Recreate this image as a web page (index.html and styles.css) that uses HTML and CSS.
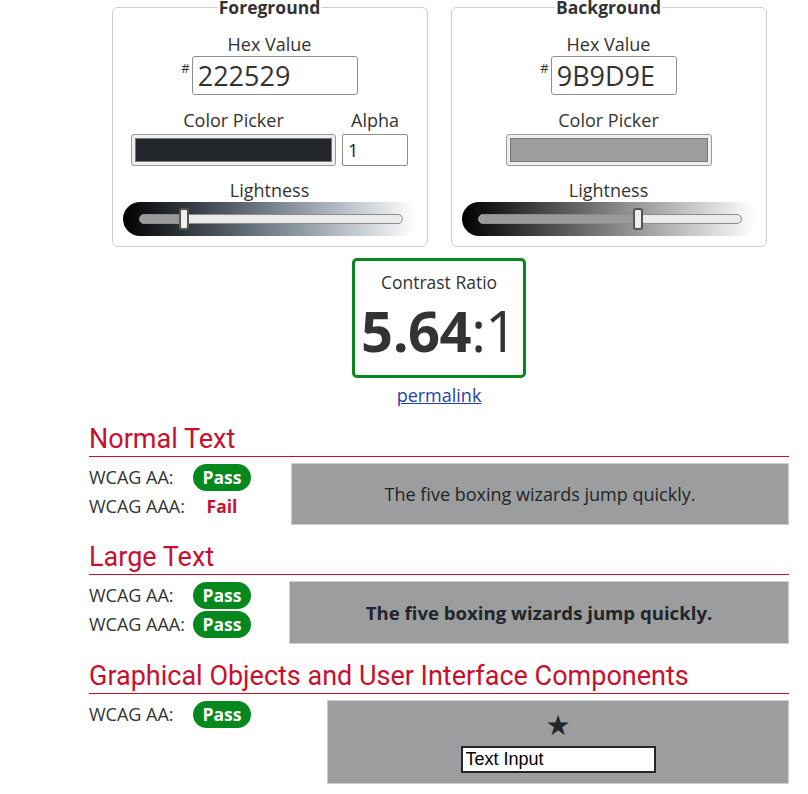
FILE: index.html
```html
<!DOCTYPE html>
<html lang="en">
<head>
<meta charset="utf-8">
<title>Contrast Checker</title>
<link rel="stylesheet" href="styles.css">
</head>
<body>
<main class="wrap">
  <div class="pickers">
    <fieldset class="picker">
      <legend>Foreground</legend>
      <div class="field">
        <label class="lbl">Hex Value</label>
        <div class="hexrow"><span class="hash">#</span><input class="hex hex-fg" type="text" value="222529"></div>
      </div>
      <div class="pickrow">
        <div class="col">
          <label class="lbl">Color Picker</label>
          <div class="swatch swatch-fg"><span class="swatch-fill fill-fg"></span></div>
        </div>
        <div class="col">
          <label class="lbl">Alpha</label>
          <input class="alpha" type="text" value="1">
        </div>
      </div>
      <div class="field field-light">
        <label class="lbl">Lightness</label>
        <div class="slider grad-fg">
          <div class="track">
            <div class="track-fill" style="width:17%"></div>
            <div class="thumb" style="left:15%"></div>
          </div>
        </div>
      </div>
    </fieldset>
    <fieldset class="picker">
      <legend>Background</legend>
      <div class="field">
        <label class="lbl">Hex Value</label>
        <div class="hexrow"><span class="hash">#</span><input class="hex hex-bg" type="text" value="9B9D9E"></div>
      </div>
      <div class="pickrow">
        <div class="col">
          <label class="lbl">Color Picker</label>
          <div class="swatch swatch-bg"><span class="swatch-fill fill-bg"></span></div>
        </div>
      </div>
      <div class="field field-light">
        <label class="lbl">Lightness</label>
        <div class="slider grad-bg">
          <div class="track">
            <div class="track-fill" style="width:61%"></div>
            <div class="thumb" style="left:59%"></div>
          </div>
        </div>
      </div>
    </fieldset>
  </div>

  <div class="ratio-wrap">
    <div class="ratio">
      <div class="ratio-label">Contrast Ratio</div>
      <div class="ratio-value"><b>5.64</b>:1</div>
    </div>
    <a class="permalink" href="#">permalink</a>
  </div>

  <section class="result">
    <h2>Normal Text</h2>
    <div class="result-body">
      <div class="checks">
        <div class="check"><span class="check-name">WCAG AA:</span><span class="badge pass">Pass</span></div>
        <div class="check"><span class="check-name">WCAG AAA:</span><span class="badge fail">Fail</span></div>
      </div>
      <div class="sample sample-normal">The five boxing wizards jump quickly.</div>
    </div>
  </section>

  <section class="result">
    <h2>Large Text</h2>
    <div class="result-body">
      <div class="checks">
        <div class="check"><span class="check-name">WCAG AA:</span><span class="badge pass">Pass</span></div>
        <div class="check"><span class="check-name">WCAG AAA:</span><span class="badge pass">Pass</span></div>
      </div>
      <div class="sample sample-large">The five boxing wizards jump quickly.</div>
    </div>
  </section>

  <section class="result">
    <h2>Graphical Objects and User Interface Components</h2>
    <div class="result-body">
      <div class="checks checks-gui">
        <div class="check"><span class="check-name">WCAG AA:</span><span class="badge pass">Pass</span></div>
      </div>
      <div class="sample sample-gui">
        <span class="star">&#9733;</span>
        <input class="demo-input" type="text" value="Text Input">
      </div>
    </div>
  </section>
</main>
</body>
</html>
```

FILE: styles.css
```css
* { box-sizing: border-box; }

html, body {
  margin: 0;
  padding: 0;
  background: #fff;
}

body {
  font-family: "Open Sans", "Liberation Sans", sans-serif;
  font-size: 18px;
  line-height: 23px;
  color: #333;
  overflow: hidden;
}

.wrap {
  width: 700px;
  margin: -4px 0 0 89px;
}

/* pickers */
.pickers {
  display: flex;
  justify-content: center;
  gap: 23px;
}

.picker {
  width: 316px;
  margin: 0;
  padding: 15px 10px 10px 10px;
  border: 1px solid #cfcfcf;
  border-radius: 6px;
  display: flex;
  flex-direction: column;
  align-items: center;
}

.picker legend {
  font-weight: 700;
  font-size: 17.5px;
  line-height: 22px;
  color: #333;
  padding: 0 1px;
  margin: 0 auto;
  text-align: center;
}

.field {
  display: flex;
  flex-direction: column;
  align-items: center;
}

.lbl {
  display: block;
  text-align: center;
  line-height: 23px;
  color: #333;
}

.hexrow {
  display: flex;
  align-items: flex-start;
}

.hash {
  font-size: 13px;
  line-height: 13px;
  margin: 6px 2px 0 0;
  color: #333;
}

.hex {
  height: 39px;
  border: 1px solid #8f8f8f;
  border-radius: 3px;
  padding: 0 5px;
  font-family: "Open Sans", sans-serif;
  font-size: 27px;
  color: #333;
  background: #fff;
}

.hex-fg { width: 166px; }
.hex-bg { width: 126px; }

.pickrow {
  display: flex;
  align-items: flex-end;
  gap: 6px;
  margin-top: 14px;
}

.col {
  display: flex;
  flex-direction: column;
  align-items: center;
}

.col .lbl { margin-bottom: 2px; }

.swatch {
  display: flex;
  height: 32px;
  padding: 3px;
  border: 1px solid #9a9a9a;
  border-radius: 3px;
  background: #efefef;
}

.swatch-fg { width: 205px; }
.swatch-bg { width: 206px; }

.swatch-fill {
  flex: 1;
  border: 1px solid #777;
}

.fill-fg { background: #222529; }
.fill-bg { background: #9b9d9e; }

.alpha {
  width: 66px;
  height: 32px;
  border: 1px solid #8f8f8f;
  border-radius: 2px;
  padding: 0 5px;
  font-family: "Open Sans", sans-serif;
  font-size: 18px;
  color: #222;
  background: #fff;
}

.field-light {
  margin-top: 13px;
  align-self: stretch;
  align-items: stretch;
}

.slider {
  height: 34px;
  border-radius: 17px;
  padding: 0 14px 0 16px;
  display: flex;
  align-items: center;
}

.grad-fg {
  background: linear-gradient(to right, #000 0%, #74808b 50%, #fff 100%);
}

.grad-bg {
  background: linear-gradient(to right, #000 0%, #808080 50%, #fff 100%);
}

.track {
  position: relative;
  flex: 1;
  height: 10px;
  border: 1px solid #8c8c8c;
  border-radius: 5px;
  background: #ebebeb;
}

.track-fill {
  height: 100%;
  background: #9a9a9a;
  border-radius: 5px 0 0 5px;
}

.thumb {
  position: absolute;
  top: -7px;
  width: 10px;
  height: 22px;
  background: #eee;
  border: 2px solid #555;
  border-radius: 3px;
}

/* ratio */
.ratio-wrap {
  display: flex;
  flex-direction: column;
  align-items: center;
  margin-top: 11px;
}

.ratio {
  width: 174px;
  height: 120px;
  border: 3px solid #05891f;
  border-radius: 5px;
  display: flex;
  flex-direction: column;
  align-items: center;
  padding-top: 10px;
}

.ratio-label {
  font-size: 17.5px;
  line-height: 23px;
  color: #333;
}

.ratio-value {
  font-size: 56px;
  line-height: 56px;
  color: #333;
  margin-top: 8px;
  letter-spacing: -0.5px;
}

.ratio-value b { font-weight: 700; }

.permalink {
  margin-top: 6px;
  color: #2641a8;
  font-size: 18px;
  line-height: 23px;
}

/* results */
.result h2 {
  margin: 16px 0 0 0;
  font-family: Roboto, "Liberation Sans", sans-serif;
  font-weight: 400;
  font-size: 27px;
  line-height: 32px;
  color: #c8102e;
  border-bottom: 1px solid #c8102e;
  padding-bottom: 1px;
}

.result-body {
  display: flex;
  align-items: flex-start;
  margin-top: 6px;
}

.checks {
  display: flex;
  flex-direction: column;
  gap: 1px;
  width: 200px;
  flex: none;
}

.checks-gui { width: 238px; }

.check {
  display: flex;
  align-items: center;
  height: 28px;
}

.check-name {
  width: 104px;
  color: #333;
}

.badge {
  width: 58px;
  height: 27px;
  border-radius: 14px;
  display: flex;
  align-items: center;
  justify-content: center;
  font-weight: 700;
  font-size: 17.5px;
}

.pass {
  background: #05891f;
  color: #fff;
}

.fail {
  color: #c8102e;
}

.sample {
  flex: 1;
  background: #9b9d9e;
  border: 1px solid #cfcfcf;
  color: #222529;
  display: flex;
  align-items: center;
  justify-content: center;
}

.sample-normal {
  height: 62px;
  margin-left: 2px;
  font-size: 18px;
}

.sample-large {
  height: 63px;
  font-size: 18.6px;
  font-weight: 700;
}

.sample-gui {
  height: 84px;
  flex-direction: column;
  justify-content: flex-start;
  padding-top: 9px;
}

.star {
  font-family: "DejaVu Sans", sans-serif;
  font-size: 28px;
  line-height: 32px;
  color: #222529;
}

.demo-input {
  width: 195px;
  height: 27px;
  margin-top: 4px;
  border: 2px solid #222529;
  background: #fff;
  padding: 0 3px;
  font-family: "Liberation Sans", Arial, sans-serif;
  font-size: 18px;
  color: #000;
}
```
